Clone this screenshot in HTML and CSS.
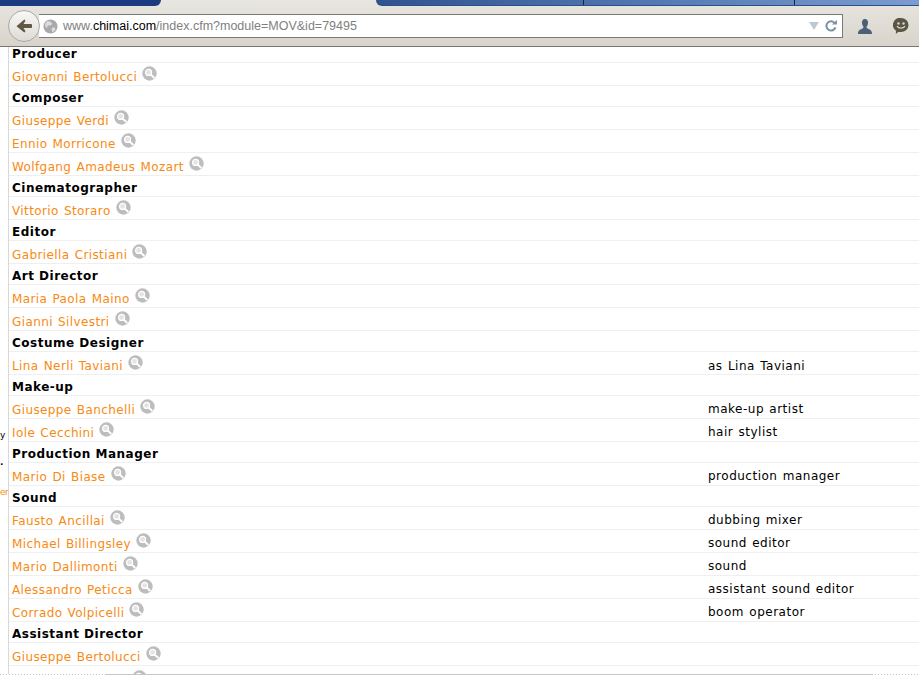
FILE: index.html
```html
<!DOCTYPE html>
<html lang="en">
<head>
<meta charset="utf-8">
<title>Chimai</title>
<link rel="stylesheet" href="styles.css">
</head>
<body>
<svg class="defs" width="0" height="0" aria-hidden="true">
  <symbol id="zoom" viewBox="0 0 15 15">
    <circle cx="7.5" cy="7.5" r="7.2" fill="#bdbdbd"/>
    <circle cx="6.6" cy="6.4" r="3" fill="#e4e4e4" stroke="#fff" stroke-width="1.2"/>
    <path d="M8.8 8.600l3 2.900" stroke="#fff" stroke-width="2" stroke-linecap="round"/>
  </symbol>
</svg>
<header class="chrome">
  <div class="tabs">
    <div class="tab-dark"></div>
    <div class="tab-gap"></div>
    <div class="tab-blues">
      <div class="tab-first"></div>
      <div class="tab-mid"></div>
    </div>
  </div>
  <div class="navbar">
    <div class="back">
      <svg width="20" height="20" viewBox="0 0 20 20"><path d="M2.500 10.200L10.300 3.500l1.200 1.200-2 3.200h7.300c.8 0 1.200.5 1.200 1.200v1.800c0 .7-.4 1.200-1.200 1.200H9.500l2 3.200-1.200 1.200z" fill="#5f5844"/></svg>
    </div>
    <div class="urlbar">
      <svg class="globe" width="15" height="15" viewBox="0 0 16 16">
        <circle cx="8" cy="8" r="7.500" fill="#a9a9a9"/>
        <path d="M5 2l3 1 2 2-2 2-3 0-1 3-2-3 1-3zM10 9l3 0 0 3-3 2-1-3z" fill="#dcdcdc"/>
      </svg>
      <span class="url"><span class="url-dim">www.</span>chimai.com<span class="url-dim">/index.cfm?module=MOV&amp;id=79495</span></span>
      <svg class="drop" width="10" height="8" viewBox="0 0 11 9"><path d="M0 0h11L5.500 9z" fill="#bcc7cf"/></svg>
      <svg class="reload" width="12" height="12" viewBox="0 0 13 13"><path d="M10.600 3.500A5 5 0 1 0 11.300 8" fill="none" stroke="#7b93a8" stroke-width="2.200"/><path d="M7.500 4.800L13 5V0z" fill="#7b93a8"/></svg>
    </div>
    <svg class="person" width="16" height="15" viewBox="0 0 16 17"><path d="M8 0c2.600 0 3.600 2.200 3.400 4.500-.1 2-1 3.300-1.600 4.200-.3 1 .2 1.700 2.600 2.800 2 .9 3.400 1.700 3.600 5.500H0c.2-3.800 1.600-4.600 3.600-5.500 2.400-1.100 2.900-1.800 2.600-2.800-.6-.9-1.500-2.200-1.600-4.200C4.400 2.200 5.400 0 8 0z" fill="#4a6078"/></svg>
    <svg class="smile" width="16" height="16" viewBox="0 0 17 17"><path d="M8.500 0a8 7.500 0 0 1 0 15H5.500L3 17l.2-3.400A7.500 7.500 0 0 1 8.500 0z" fill="#5a5545"/><circle cx="5.800" cy="5.800" r="1.300" fill="#d8d4c8"/><circle cx="11.200" cy="5.800" r="1.300" fill="#d8d4c8"/><path d="M4.200 8.600c2 2.800 6.600 2.800 8.600 0" fill="none" stroke="#d8d4c8" stroke-width="1.300"/></svg>
  </div>
</header>
<main class="page">
  <aside class="gutter">
    <span class="gutter-y">y</span>
    <span class="gutter-dot">.</span>
    <span class="gutter-er">er</span>
  </aside>
  <div class="credits">
    <div class="row role first"><b>Producer</b></div>
    <div class="row person-row"><a>Giovanni Bertolucci</a><svg class="zoom"><use href="#zoom"/></svg></div>
    <div class="row role"><b>Composer</b></div>
    <div class="row person-row"><a>Giuseppe Verdi</a><svg class="zoom"><use href="#zoom"/></svg></div>
    <div class="row person-row"><a>Ennio Morricone</a><svg class="zoom"><use href="#zoom"/></svg></div>
    <div class="row person-row"><a>Wolfgang Amadeus Mozart</a><svg class="zoom"><use href="#zoom"/></svg></div>
    <div class="row role"><b>Cinematographer</b></div>
    <div class="row person-row"><a>Vittorio Storaro</a><svg class="zoom"><use href="#zoom"/></svg></div>
    <div class="row role"><b>Editor</b></div>
    <div class="row person-row"><a>Gabriella Cristiani</a><svg class="zoom"><use href="#zoom"/></svg></div>
    <div class="row role"><b>Art Director</b></div>
    <div class="row person-row"><a>Maria Paola Maino</a><svg class="zoom"><use href="#zoom"/></svg></div>
    <div class="row person-row"><a>Gianni Silvestri</a><svg class="zoom"><use href="#zoom"/></svg></div>
    <div class="row role"><b>Costume Designer</b></div>
    <div class="row person-row"><a>Lina Nerli Taviani</a><svg class="zoom"><use href="#zoom"/></svg><span class="note note-low">as Lina Taviani</span></div>
    <div class="row role"><b>Make-up</b></div>
    <div class="row person-row"><a>Giuseppe Banchelli</a><svg class="zoom"><use href="#zoom"/></svg><span class="note">make-up artist</span></div>
    <div class="row person-row"><a>Iole Cecchini</a><svg class="zoom"><use href="#zoom"/></svg><span class="note">hair stylist</span></div>
    <div class="row role"><b>Production Manager</b></div>
    <div class="row person-row"><a>Mario Di Biase</a><svg class="zoom"><use href="#zoom"/></svg><span class="note">production manager</span></div>
    <div class="row role"><b>Sound</b></div>
    <div class="row person-row"><a>Fausto Ancillai</a><svg class="zoom"><use href="#zoom"/></svg><span class="note">dubbing mixer</span></div>
    <div class="row person-row"><a>Michael Billingsley</a><svg class="zoom"><use href="#zoom"/></svg><span class="note">sound editor</span></div>
    <div class="row person-row"><a>Mario Dallimonti</a><svg class="zoom"><use href="#zoom"/></svg><span class="note">sound</span></div>
    <div class="row person-row"><a>Alessandro Peticca</a><svg class="zoom"><use href="#zoom"/></svg><span class="note">assistant sound editor</span></div>
    <div class="row person-row"><a>Corrado Volpicelli</a><svg class="zoom"><use href="#zoom"/></svg><span class="note">boom operator</span></div>
    <div class="row role"><b>Assistant Director</b></div>
    <div class="row person-row"><a>Giuseppe Bertolucci</a><svg class="zoom"><use href="#zoom"/></svg></div>
    <div class="row person-row"><svg class="zoom zoom-cut"><use href="#zoom"/></svg></div>
  </div>
</main>
<footer class="status">
  <div class="status-dots status-left"></div>
  <div class="status-solid"></div>
  <div class="status-dots"></div>
</footer>
</body>
</html>
```
FILE: styles.css
```css
* { box-sizing: border-box; }
html, body { margin: 0; height: 675px; overflow: hidden; background: #fff; }
body { display: flex; flex-direction: column; font: 12px "DejaVu Sans", sans-serif; color: #000; }
.defs { position: absolute; }
.chrome { flex: none; height: 47px; background: linear-gradient(#e8e6e0, #d8d4cc); border-bottom: 1px solid #777; }
.tabs { display: flex; height: 6px; }
.tab-dark { width: 161px; background: #1c3b80; border-bottom-right-radius: 8px; }
.tab-gap { width: 215px; }
.tab-blues { flex: 1; display: flex; background: linear-gradient(90deg, #30538f, #5b7fb8 60%, #7c9ccf); border-bottom: 1px solid #2c4f88; border-bottom-left-radius: 8px; }
.tab-first { width: 208px; border-right: 1px solid #223; }
.tab-mid { width: 211px; border-right: 1px solid #223; }
.navbar { display: flex; align-items: center; height: 40px; padding: 0 0 0 8px; }
.back { flex: none; width: 32px; height: 32px; margin-right: -1px; border-radius: 50%; border: 1px solid #aaa; background: linear-gradient(#f8f8f6, #dedbd3); display: flex; align-items: center; justify-content: center; position: relative; z-index: 1; }
.urlbar { flex: none; width: 804px; height: 24px; background: #fff; border: 1px solid #7a7a7a; border-left: 0; display: flex; align-items: center; padding: 0 5px 0 4px; font: 12.5px "Liberation Sans", sans-serif; }
.globe { flex: none; margin-right: 5px; }
.url { flex: 1; color: #000; }
.url-dim { color: #808080; }
.drop { margin-right: 6px; }
.person { flex: none; margin-left: 14px; }
.smile { flex: none; margin-left: 20px; }
.page { flex: 1; min-height: 0; display: flex; overflow: hidden; }
.gutter { flex: none; width: 9px; border-right: 1px solid #d8d8d8; position: relative; overflow: hidden; font-size: 9px; }
.gutter span { position: absolute; left: 0; }
.gutter-y { top: 383px; }
.gutter-dot { top: 410px; font-weight: bold; }
.gutter-er { top: 440px; color: #f78a12; letter-spacing: -0.5px; }
.credits { flex: 1; min-width: 0; }
.row { display: flex; border-bottom: 1px solid #efefef; padding-left: 3px; position: relative; }
.role { height: 21px; align-items: center; padding-top: 4px; letter-spacing: 0.5px; }
.role.first { height: 16px; padding-top: 0; align-items: flex-end; padding-bottom: 1px; }
.person-row { height: 23px; padding-top: 5px; align-items: center; }
.person-row a { color: #f78a12; letter-spacing: 0.39px; word-spacing: 1px; }
.zoom { flex: none; width: 15px; height: 15px; margin: -7px 0 0 5px; }
.zoom-cut { margin: -4px 0 0 120px; }
.note { position: absolute; left: 699px; top: 6px; line-height: 14px; letter-spacing: 0.5px; word-spacing: 1px; }
.note-low { top: 7px; }
.status { flex: none; height: 1px; display: flex; }
.status-solid { width: 767px; background: #c9c7bd; }
.status-dots { flex: 1; background: repeating-linear-gradient(90deg, #c9c7bd 0 1px, transparent 1px 3px); }
.status-left { flex: none; width: 105px; }
```
